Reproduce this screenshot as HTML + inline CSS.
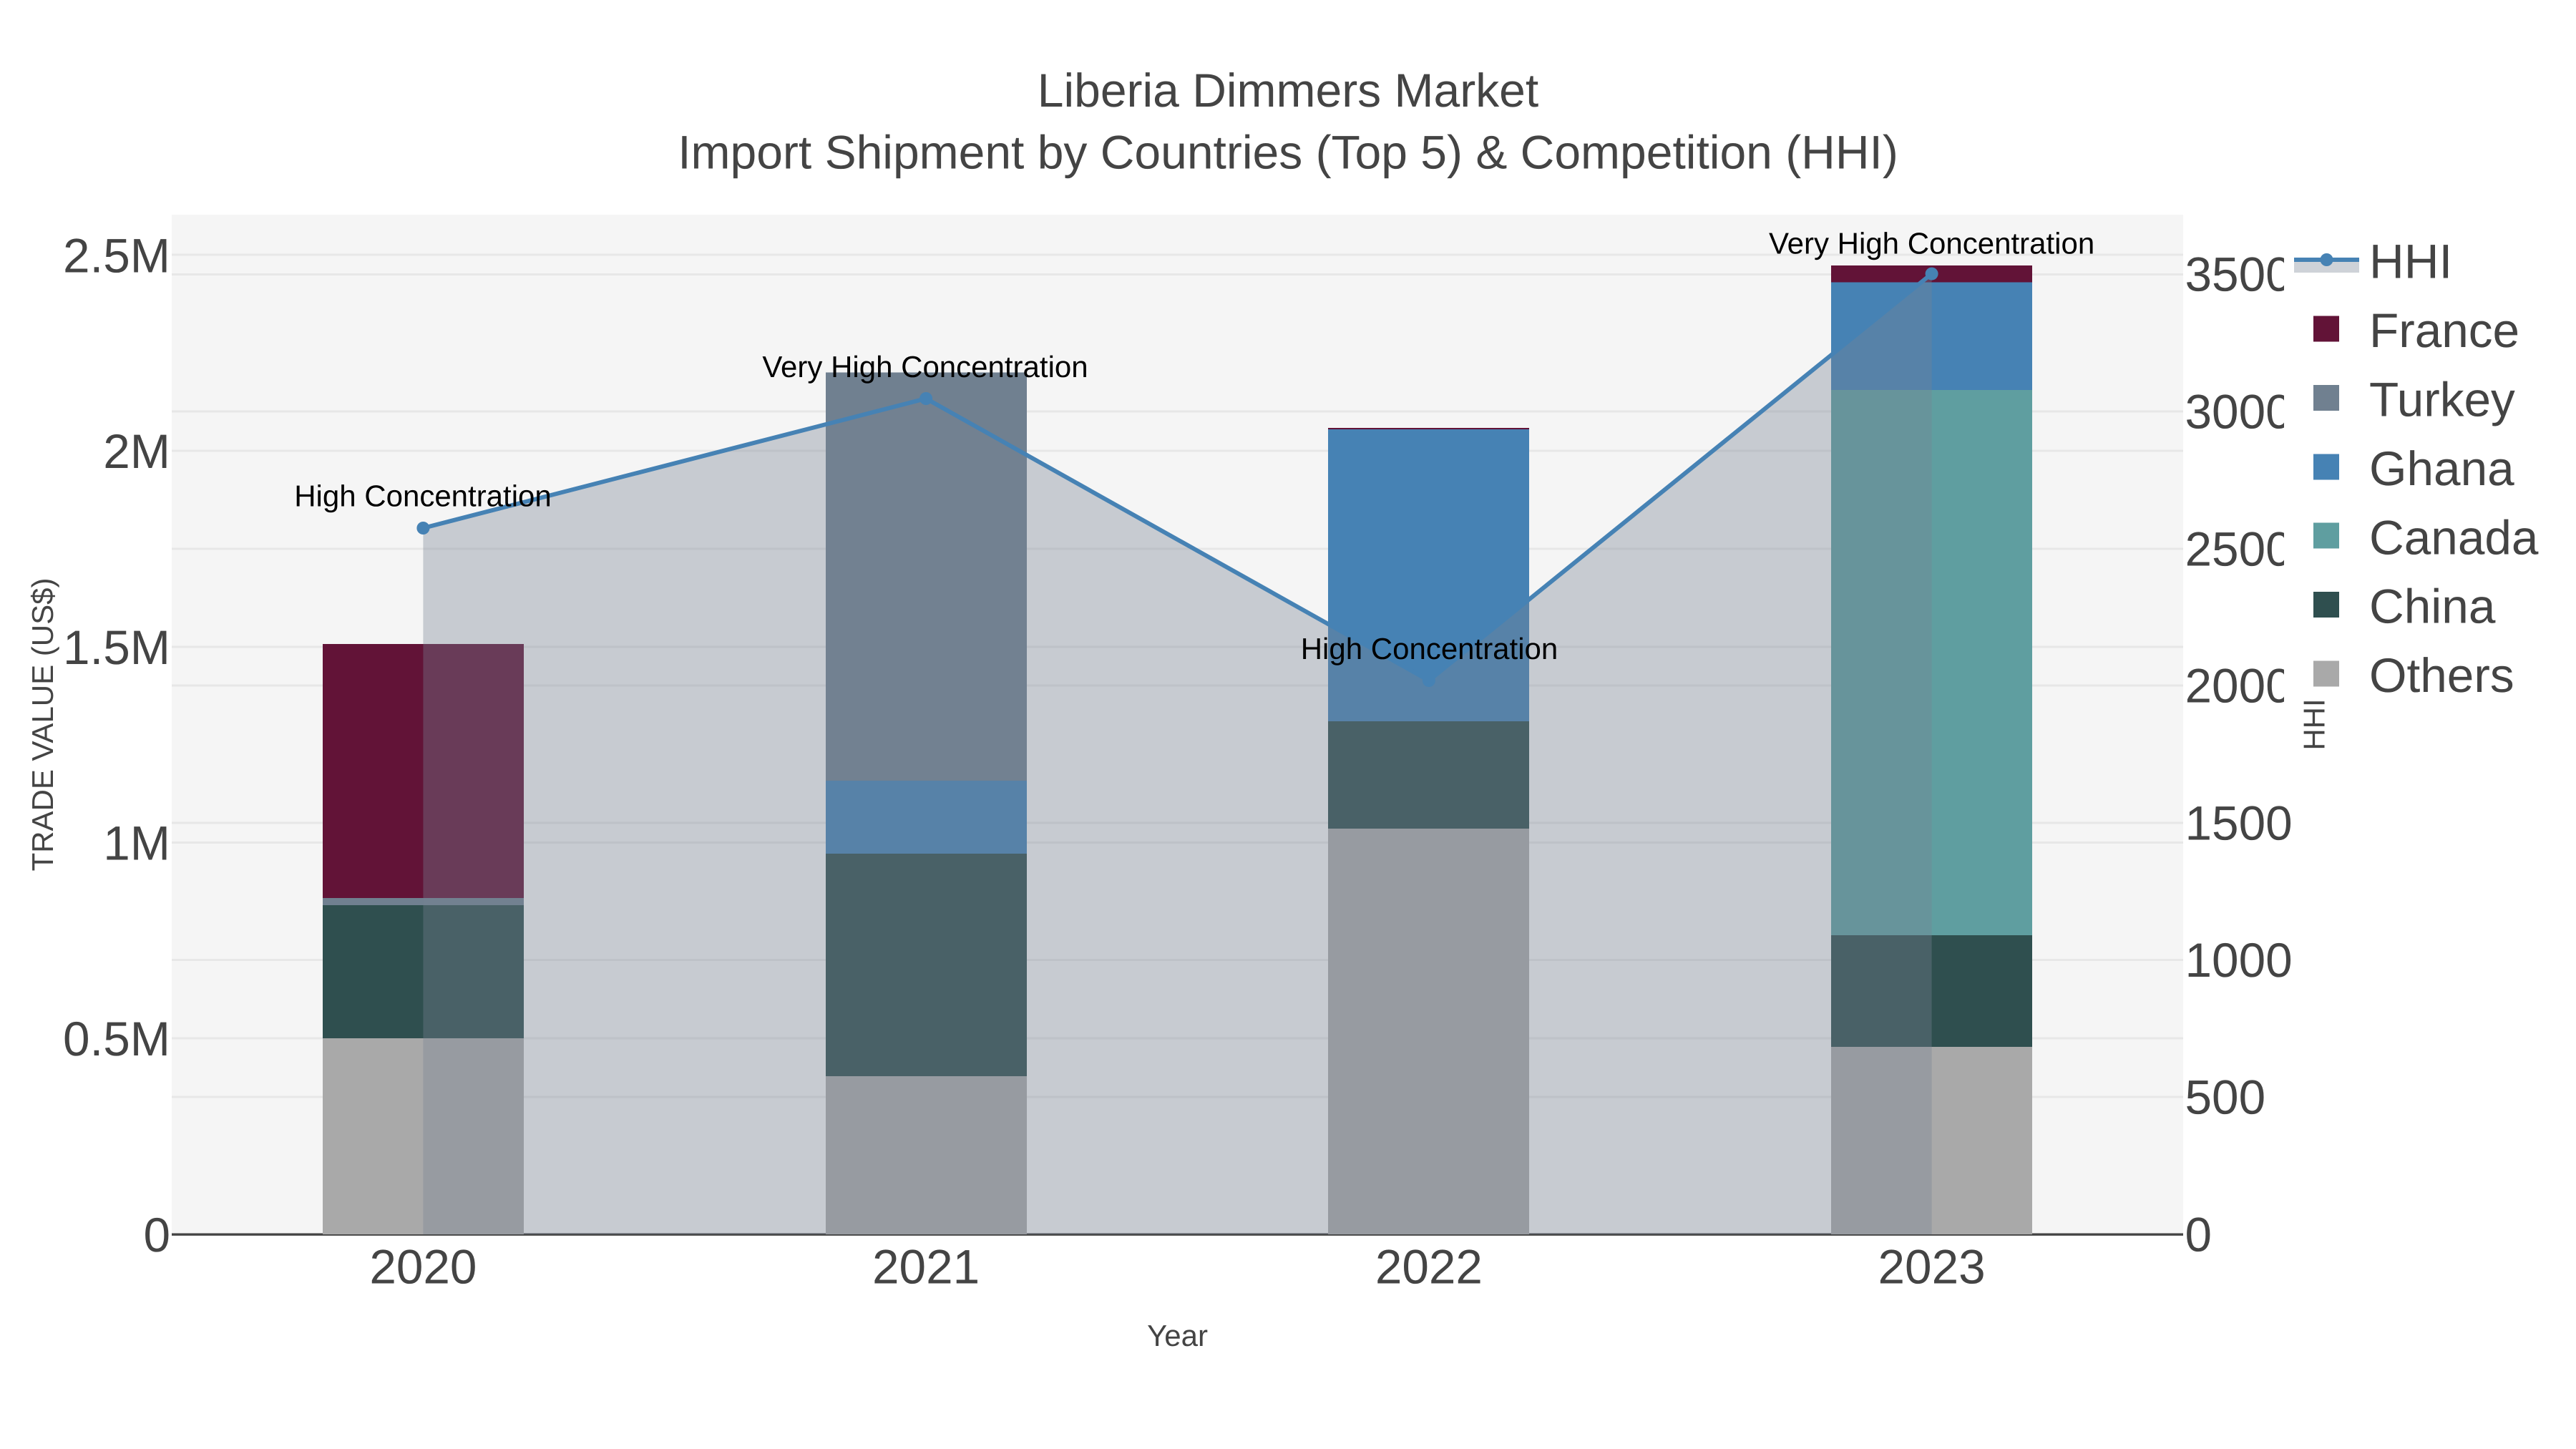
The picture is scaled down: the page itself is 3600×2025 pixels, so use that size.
<!DOCTYPE html>
<html>
<head>
<meta charset="utf-8">
<title>Liberia Dimmers Market</title>
<style>
html,body{margin:0;padding:0;background:#fff;width:3600px;height:2025px;overflow:hidden}
svg{display:block}
text{font-family:"Liberation Sans",Arial,sans-serif;fill:#444;text-rendering:geometricPrecision}
.h{font-size:66px}
.t{font-size:67.5px}
.a{font-size:42px;fill:#000;text-anchor:middle}
.s{font-size:42px}
.l{text-anchor:end}
.m{text-anchor:middle}
</style>
</head>
<body>
<svg width="3600" height="2025" viewBox="0 0 3600 2025" xmlns="http://www.w3.org/2000/svg">
<rect x="0" y="0" width="3600" height="2025" fill="#fff"/>
<rect x="240" y="300" width="2811" height="1425" fill="#f5f5f5"/>
<!-- grid -->
<g stroke="#e7e7e7" stroke-width="3" fill="none">
<path d="M240 356H3051M240 630H3051M240 904H3051M240 1177.5H3051M240 1451H3051"/>
<path d="M240 383.5H3051M240 575H3051M240 767H3051M240 958H3051M240 1150H3051M240 1341.5H3051M240 1533H3051"/>
</g>
<path d="M240 1725.2H3051" stroke="#444" stroke-width="3.4" fill="none"/>
<!-- bars -->
<g shape-rendering="crispEdges">
<!-- 2020 -->
<rect x="451" y="1451" width="281" height="274" fill="#a9a9a9"/>
<rect x="451" y="1265" width="281" height="186" fill="#2f4f4f"/>
<rect x="451" y="1255" width="281" height="10" fill="#708090"/>
<rect x="451" y="900" width="281" height="355" fill="#621337"/>
<!-- 2021 -->
<rect x="1154" y="1504" width="281" height="221" fill="#a9a9a9"/>
<rect x="1154" y="1193" width="281" height="311" fill="#2f4f4f"/>
<rect x="1154" y="1091" width="281" height="102" fill="#4682b4"/>
<rect x="1154" y="520.5" width="281" height="570.5" fill="#708090"/>
<!-- 2022 -->
<rect x="1856" y="1158" width="281" height="567" fill="#a9a9a9"/>
<rect x="1856" y="1008" width="281" height="150" fill="#2f4f4f"/>
<rect x="1856" y="600" width="281" height="408" fill="#4682b4"/>
<rect x="1856" y="598" width="281" height="2" fill="#621337"/>
<!-- 2023 -->
<rect x="2559" y="1463" width="281" height="262" fill="#a9a9a9"/>
<rect x="2559" y="1307" width="281" height="156" fill="#2f4f4f"/>
<rect x="2559" y="545" width="281" height="762" fill="#5f9ea0"/>
<rect x="2559" y="394.5" width="281" height="150.5" fill="#4682b4"/>
<rect x="2559" y="371" width="281" height="23.5" fill="#621337"/>
</g>
<!-- HHI area + line -->
<path d="M591.4 738L1294.1 557L1996.9 951L2699.6 382.6V1725H591.4Z" fill="rgb(120,131,148)" fill-opacity="0.36"/>
<path d="M591.4 738L1294.1 557L1996.9 951L2699.6 382.6" fill="none" stroke="#4682b4" stroke-width="6" stroke-linejoin="round"/>
<g fill="#4682b4">
<circle cx="591.4" cy="738" r="9"/>
<circle cx="1294.1" cy="557" r="9"/>
<circle cx="1996.9" cy="951" r="9"/>
<circle cx="2699.6" cy="382.6" r="9"/>
</g>
<!-- annotations -->
<text class="a" x="591" y="707.5">High Concentration</text>
<text class="a" x="1293" y="527">Very High Concentration</text>
<text class="a" x="1997.5" y="921">High Concentration</text>
<text class="a" x="2699.6" y="354.5">Very High Concentration</text>
<!-- title -->
<text class="h m" x="1800" y="149">Liberia Dimmers Market</text>
<text class="h m" x="1800" y="235.5">Import Shipment by Countries (Top 5) &amp; Competition (HHI)</text>
<!-- left ticks -->
<text class="t l" x="238" y="380.5">2.5M</text>
<text class="t l" x="238" y="654">2M</text>
<text class="t l" x="238" y="928">1.5M</text>
<text class="t l" x="238" y="1201.5">1M</text>
<text class="t l" x="238" y="1475">0.5M</text>
<text class="t l" x="238" y="1749">0</text>
<!-- x ticks -->
<text class="t m" x="591.4" y="1793.5">2020</text>
<text class="t m" x="1294.1" y="1793.5">2021</text>
<text class="t m" x="1996.9" y="1793.5">2022</text>
<text class="t m" x="2699.6" y="1793.5">2023</text>
<!-- right ticks -->
<text class="t" x="3053.5" y="406.5">3500</text>
<text class="t" x="3053.5" y="598.5">3000</text>
<text class="t" x="3053.5" y="790.5">2500</text>
<text class="t" x="3053.5" y="981.7">2000</text>
<text class="t" x="3053.5" y="1173.5">1500</text>
<text class="t" x="3053.5" y="1365">1000</text>
<text class="t" x="3053.5" y="1556.5">500</text>
<text class="t" x="3053.5" y="1748.5">0</text>
<!-- legend -->
<rect x="3192" y="330" width="408" height="670" fill="#fff"/>
<rect x="3206" y="363" width="91" height="18" fill="rgb(120,131,148)" fill-opacity="0.36"/>
<path d="M3206 363H3297" stroke="#4682b4" stroke-width="6" fill="none"/>
<circle cx="3251.5" cy="363" r="9" fill="#4682b4"/>
<g shape-rendering="crispEdges">
<rect x="3233" y="441.5" width="36" height="36" fill="#621337"/>
<rect x="3233" y="538" width="36" height="36" fill="#708090"/>
<rect x="3233" y="634.5" width="36" height="36" fill="#4682b4"/>
<rect x="3233" y="730.5" width="36" height="36" fill="#5f9ea0"/>
<rect x="3233" y="827" width="36" height="36" fill="#2f4f4f"/>
<rect x="3233" y="923.5" width="36" height="36" fill="#a9a9a9"/>
</g>
<text class="t" x="3311" y="388.5">HHI</text>
<text class="t" x="3311" y="485">France</text>
<text class="t" x="3311" y="581.5">Turkey</text>
<text class="t" x="3311" y="678">Ghana</text>
<text class="t" x="3311" y="774.5">Canada</text>
<text class="t" x="3311" y="870.5">China</text>
<text class="t" x="3311" y="967">Others</text>
<!-- axis titles -->
<text class="s m" x="1645.5" y="1881">Year</text>
<text class="s m" transform="translate(74 1012.5) rotate(-90)">TRADE VALUE (US$)</text>
<text class="s m" transform="translate(3248.5 1012.5) rotate(-90)">HHI</text>
</svg>
</body>
</html>
